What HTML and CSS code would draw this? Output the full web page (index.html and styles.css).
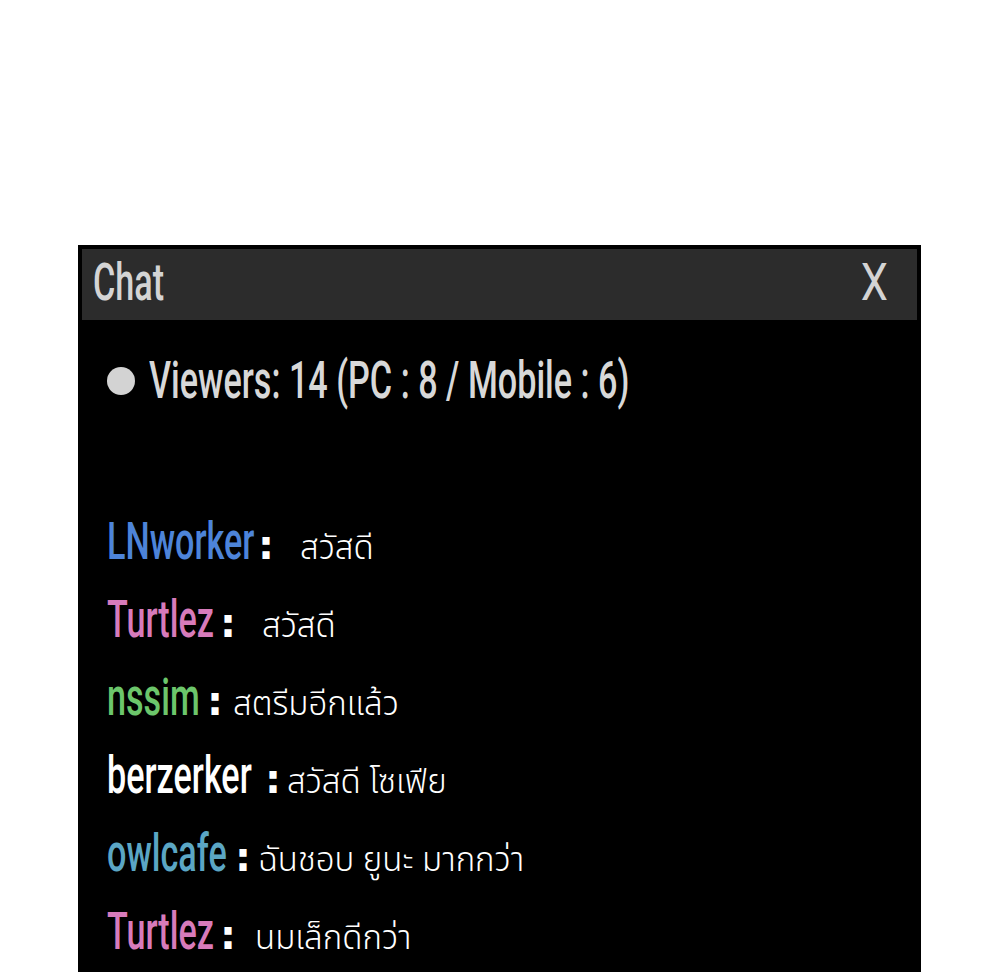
FILE: index.html
```html
<!DOCTYPE html>
<html lang="th">
<head>
<meta charset="UTF-8">
<title>Chat</title>
<link rel="stylesheet" href="styles.css">
</head>
<body>
  <div class="chat">
    <div class="chat-head">
      <span class="cond title">Chat</span>
      <span class="cond close">X</span>
    </div>
    <div class="viewers">
      <span class="dot"></span>
      <span class="cond">Viewers: 14 (PC : 8 / Mobile : 6)</span>
    </div>
    <div class="msgs">
      <div class="msg r1"><span class="nick"><span class="cond blue">LNworker</span></span><span class="colon">:</span><span class="text">สวัสดี</span></div>
      <div class="msg r2"><span class="nick"><span class="cond pink">Turtlez</span></span><span class="colon">:</span><span class="text">สวัสดี</span></div>
      <div class="msg r3"><span class="nick"><span class="cond green">nssim</span></span><span class="colon">:</span><span class="text">สตรีมอีกแล้ว</span></div>
      <div class="msg r4"><span class="nick"><span class="cond white">berzerker</span></span><span class="colon">:</span><span class="text">สวัสดี โซเฟีย</span></div>
      <div class="msg r5"><span class="nick"><span class="cond teal">owlcafe</span></span><span class="colon">:</span><span class="text">ฉันชอบ ยูนะ มากกว่า</span></div>
      <div class="msg r6"><span class="nick"><span class="cond pink">Turtlez</span></span><span class="colon">:</span><span class="text">นมเล็กดีกว่า</span></div>
    </div>
  </div>
</body>
</html>
```

FILE: styles.css
```css
body {
  margin: 0;
  background-color: #ffffff;
  font-family: Roboto, "Noto Sans", sans-serif;
}

.chat {
  margin: 245px 0 0 78px;
  width: 835px;
  height: 723px;
  padding: 4px;
  background-color: #000000;
}

.chat-head {
  height: 71px;
  background-color: #2c2c2c;
  display: flex;
  align-items: center;
  justify-content: space-between;
  padding: 0 29px 0 11px;
  color: #d4d4d4;
}

.cond {
  display: inline-block;
  font-family: Roboto, "DejaVu Sans Condensed", sans-serif;
  font-weight: 500;
  font-size: 51px;
  line-height: 1;
  transform: scaleX(0.67);
  transform-origin: left center;
  white-space: nowrap;
}

.title {
  margin-top: -4px;
}

.close {
  font-weight: 400;
  transform: scaleX(0.85);
  transform-origin: right center;
  margin-top: -4px;
}

.viewers {
  display: flex;
  align-items: center;
  gap: 14px;
  padding: 35px 0 0 25px;
  color: #d8d8d8;
}

.dot {
  width: 28px;
  height: 28px;
  border-radius: 50%;
  background-color: #d3d3d3;
  flex-shrink: 0;
}

.msgs {
  padding: 110px 0 0 25px;
}

.msg {
  display: flex;
  align-items: baseline;
  height: 78px;
}

.nick {
  width: var(--nick);
  flex-shrink: 0;
}

.colon {
  display: inline-block;
  width: 10px;
  font-family: "DejaVu Sans", sans-serif;
  font-weight: bold;
  font-size: 40px;
  color: #ffffff;
  margin-right: var(--gap);
}

.text {
  font-family: "Noto Sans Thai", "Noto Sans", sans-serif;
  font-weight: 300;
  font-size: 33px;
  color: #ffffff;
  white-space: nowrap;
}

.blue { color: #4d84d9; }
.pink { color: #d77bbb; }
.green { color: #6cc66b; }
.white { color: #ffffff; }
.teal { color: #5ba6c4; }

.r1 { --nick: 151px; --gap: 32px; }
.r2 { --nick: 113px; --gap: 32px; }
.r3 { --nick: 100px; --gap: 16px; }
.r4 { --nick: 158px; --gap: 12px; }
.r5 { --nick: 128px; --gap: 13px; }
.r6 { --nick: 113px; --gap: 25px; }
```
